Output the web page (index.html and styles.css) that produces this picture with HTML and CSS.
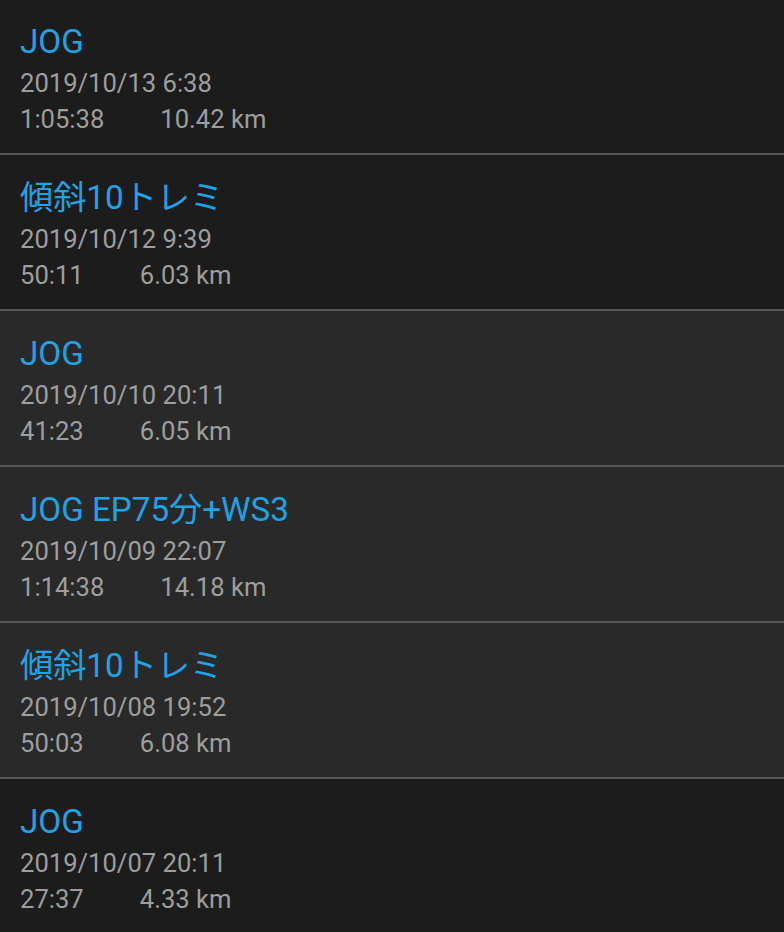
FILE: index.html
```html
<!DOCTYPE html>
<html lang="ja">
<head>
    <meta charset="UTF-8">
    <meta name="viewport" content="width=device-width, initial-scale=1.0">
    <title>Workout History</title>
    <link rel="stylesheet" href="styles.css">
</head>
<body>
    <div class="list">
        <div class="item">
            <div class="item-title">JOG</div>
            <div class="item-date">2019/10/13 6:38</div>
            <div class="item-meta"><span class="time">1:05:38</span><span class="dist">10.42 km</span></div>
        </div>
        <div class="item">
            <div class="item-title">傾斜10トレミ</div>
            <div class="item-date">2019/10/12 9:39</div>
            <div class="item-meta"><span class="time">50:11</span><span class="dist">6.03 km</span></div>
        </div>
        <div class="item light">
            <div class="item-title">JOG</div>
            <div class="item-date">2019/10/10 20:11</div>
            <div class="item-meta"><span class="time">41:23</span><span class="dist">6.05 km</span></div>
        </div>
        <div class="item light">
            <div class="item-title">JOG EP75分+WS3</div>
            <div class="item-date">2019/10/09 22:07</div>
            <div class="item-meta"><span class="time">1:14:38</span><span class="dist">14.18 km</span></div>
        </div>
        <div class="item light">
            <div class="item-title">傾斜10トレミ</div>
            <div class="item-date">2019/10/08 19:52</div>
            <div class="item-meta"><span class="time">50:03</span><span class="dist">6.08 km</span></div>
        </div>
        <div class="item">
            <div class="item-title">JOG</div>
            <div class="item-date">2019/10/07 20:11</div>
            <div class="item-meta"><span class="time">27:37</span><span class="dist">4.33 km</span></div>
        </div>
    </div>
</body>
</html>
```

FILE: styles.css
```css
body {
    font-family: Roboto, "Noto Sans CJK JP", sans-serif;
    margin: 0;
    padding: 0;
    background-color: #1c1c1c;
    overflow: hidden;
}
.list {
    margin-top: -1px;
}
.item {
    height: 133px;
    padding: 21px 20px 0;
    background-color: #1c1c1c;
    border-bottom: 2px solid #555555;
}
.item.light {
    background-color: #292929;
}
.item-title {
    color: #1fa3e6;
    font-size: 33.2px;
    line-height: 43px;
    white-space: nowrap;
}
.item-date {
    color: #9e9e9e;
    font-size: 25.6px;
    line-height: 40px;
}
.item-meta {
    color: #9e9e9e;
    font-size: 25.6px;
    line-height: 32px;
}
.item-meta .dist {
    margin-left: 56px;
}
```
